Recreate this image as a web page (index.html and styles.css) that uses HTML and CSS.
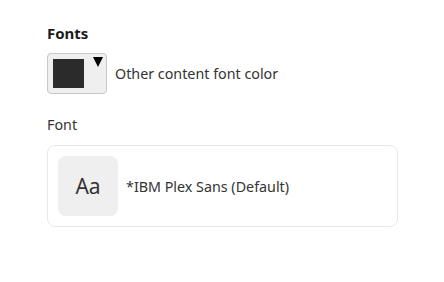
FILE: index.html
```html
<!DOCTYPE html>
<html>
<head>
<meta charset="utf-8">
<link rel="stylesheet" href="styles.css">
</head>
<body>
<div class="panel">
  <h2 class="title">Fonts</h2>
  <div class="color-row">
    <button class="color-btn"><span class="swatch"></span><svg class="caret" width="10" height="10" viewBox="0 0 10 10"><path d="M0 0H10L5 10Z" fill="#000"/></svg></button>
    <span class="color-label">Other content font color</span>
  </div>
  <div class="field-label">Font</div>
  <div class="font-card">
    <div class="preview">Aa</div>
    <div class="font-name">*IBM Plex Sans (Default)</div>
  </div>
</div>
</body>
</html>
```
FILE: styles.css
```css
html, body { margin: 0; padding: 0; background: #fff; }
body { font-family: "Noto Sans", "Open Sans", sans-serif; color: #222; }
.panel { padding: 24px 46px 0 47px; }
.title { margin: 0; font-size: 15px; font-weight: 700; line-height: 18px; color: #1a1a1a; }
.color-row { display: flex; align-items: center; gap: 8px; margin-top: 11px; }
.color-btn {
  width: 60px; height: 41px; box-sizing: border-box; padding: 0 0 0 5px;
  display: flex; align-items: flex-start; gap: 9px;
  background: #efefef; border: 1px solid #c8c8c8; border-radius: 4px;
}
.swatch { width: 31px; height: 29px; margin-top: 5px; background: #2b2b2b; }
.caret { margin-top: 3px; display: block; }
.color-label { font-size: 14.3px; color: #333; }
.field-label { margin-top: 22px; font-size: 14.3px; color: #333; line-height: 18px; }
.font-card {
  margin-top: 11px; border: 1px solid #e8e8e8; border-radius: 8px;
  padding: 10px; display: flex; align-items: center; gap: 8px;
}
.preview {
  width: 60px; height: 60px; border-radius: 8px; background: #efefef;
  display: flex; align-items: center; justify-content: center;
  font-size: 21px; color: #333;
}
.font-name { font-size: 14.3px; color: #333; }
```
